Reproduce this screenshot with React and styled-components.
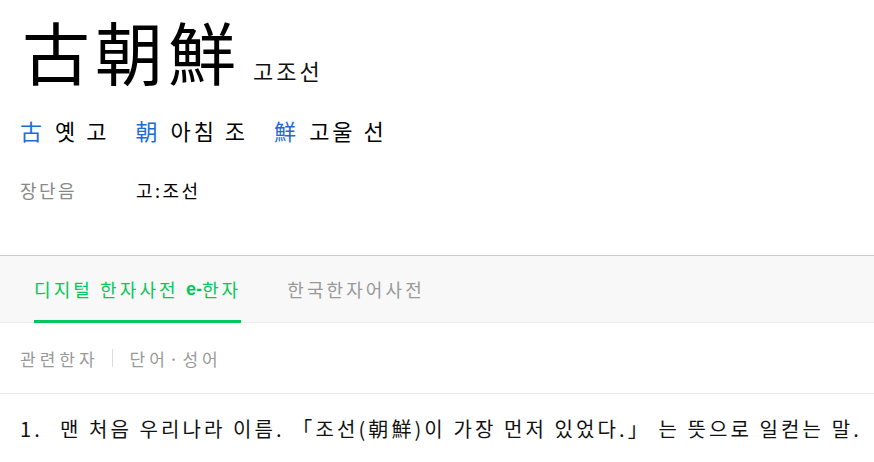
import React from "react";
import styled, { createGlobalStyle } from "styled-components";

const Global = createGlobalStyle`
  body {
    margin: 0;
    background: #fff;
    font-family: "Noto Sans CJK KR", "Noto Sans", sans-serif;
    color: #000;
  }
`;

const Page = styled.div`
  width: 874px;
  overflow: hidden;
`;

const Head = styled.div`
  padding: 0 20px;
  height: 256px;
  border-bottom: 1px solid #ccc;
  box-sizing: border-box;
`;

const TitleRow = styled.div`
  display: flex;
  align-items: baseline;
  padding-top: 6px;
  height: 96px;
`;

const Hanja = styled.h1`
  margin: 0 0 0 2px;
  font-size: 68px;
  font-weight: 400;
  line-height: 90px;
  letter-spacing: 5px;
`;

const Reading = styled.span`
  margin-left: 12px;
  font-size: 22px;
  letter-spacing: 3px;
  color: #111;
`;

const Meanings = styled.div`
  display: flex;
  gap: 26px;
  margin-top: 15px;
  font-size: 22px;
  line-height: 26px;
  letter-spacing: 3px;
`;

const Meaning = styled.span`
  display: flex;
  gap: 10px;
`;

const Char = styled.span`
  color: #1a6cd4;
`;

const Info = styled.div`
  display: flex;
  margin-top: 36px;
  font-size: 18px;
  line-height: 22px;
  letter-spacing: 2.5px;
`;

const InfoLabel = styled.span`
  width: 116px;
  color: #888;
`;

const Tabs = styled.div`
  display: flex;
  gap: 46px;
  padding: 0 34px;
  height: 67px;
  background: #f8f8f8;
  border-bottom: 1px solid #ececec;
  box-sizing: border-box;
`;

const Tab = styled.div`
  display: flex;
  align-items: center;
  font-size: 18px;
  letter-spacing: 3.1px;
  color: ${(p) => (p.active ? "#03c75a" : "#999")};
  border-bottom: 3px solid ${(p) => (p.active ? "#03c75a" : "transparent")};
  margin-bottom: -1px;
  padding-top: 2px;
`;

const Bold = styled.b`
  font-family: "Liberation Sans", sans-serif;
  font-weight: 700;
  letter-spacing: 0;
`;

const SubTabs = styled.div`
  display: flex;
  align-items: center;
  gap: 13px;
  padding: 0 20px;
  height: 70px;
  border-bottom: 1px solid #ececec;
  font-size: 17px;
  letter-spacing: 4px;
  color: #999;
`;

const Sep = styled.span`
  width: 1px;
  height: 18px;
  margin-right: 4px;
  background: #ddd;
`;

const Def = styled.ol`
  margin: 0;
  padding: 22px 20px;
  list-style: none;
  font-size: 20px;
  line-height: 26px;
  letter-spacing: 3.1px;
  color: #111;
  white-space: nowrap;
`;

const Num = styled.span`
  margin-right: 17px;
`;

export default function App() {
  return (
    <Page>
      <Global />
      <Head>
        <TitleRow>
          <Hanja>古朝鮮</Hanja>
          <Reading>고조선</Reading>
        </TitleRow>
        <Meanings>
          <Meaning>
            <Char>古</Char>옛 고
          </Meaning>
          <Meaning>
            <Char>朝</Char>아침 조
          </Meaning>
          <Meaning>
            <Char>鮮</Char>고울 선
          </Meaning>
        </Meanings>
        <Info>
          <InfoLabel>장단음</InfoLabel>
          <span>고:조선</span>
        </Info>
      </Head>
      <Tabs>
        <Tab active>
          디지털 한자사전&nbsp;<Bold>e-</Bold>한자
        </Tab>
        <Tab>한국한자어사전</Tab>
      </Tabs>
      <SubTabs>
        <span>관련한자</span>
        <Sep />
        <span>단어·성어</span>
      </SubTabs>
      <Def>
        <li>
          <Num>1.</Num>맨 처음 우리나라 이름. 「조선(朝鮮)이 가장 먼저 있었다.」 는 뜻으로 일컫는 말.
        </li>
      </Def>
    </Page>
  );
}
